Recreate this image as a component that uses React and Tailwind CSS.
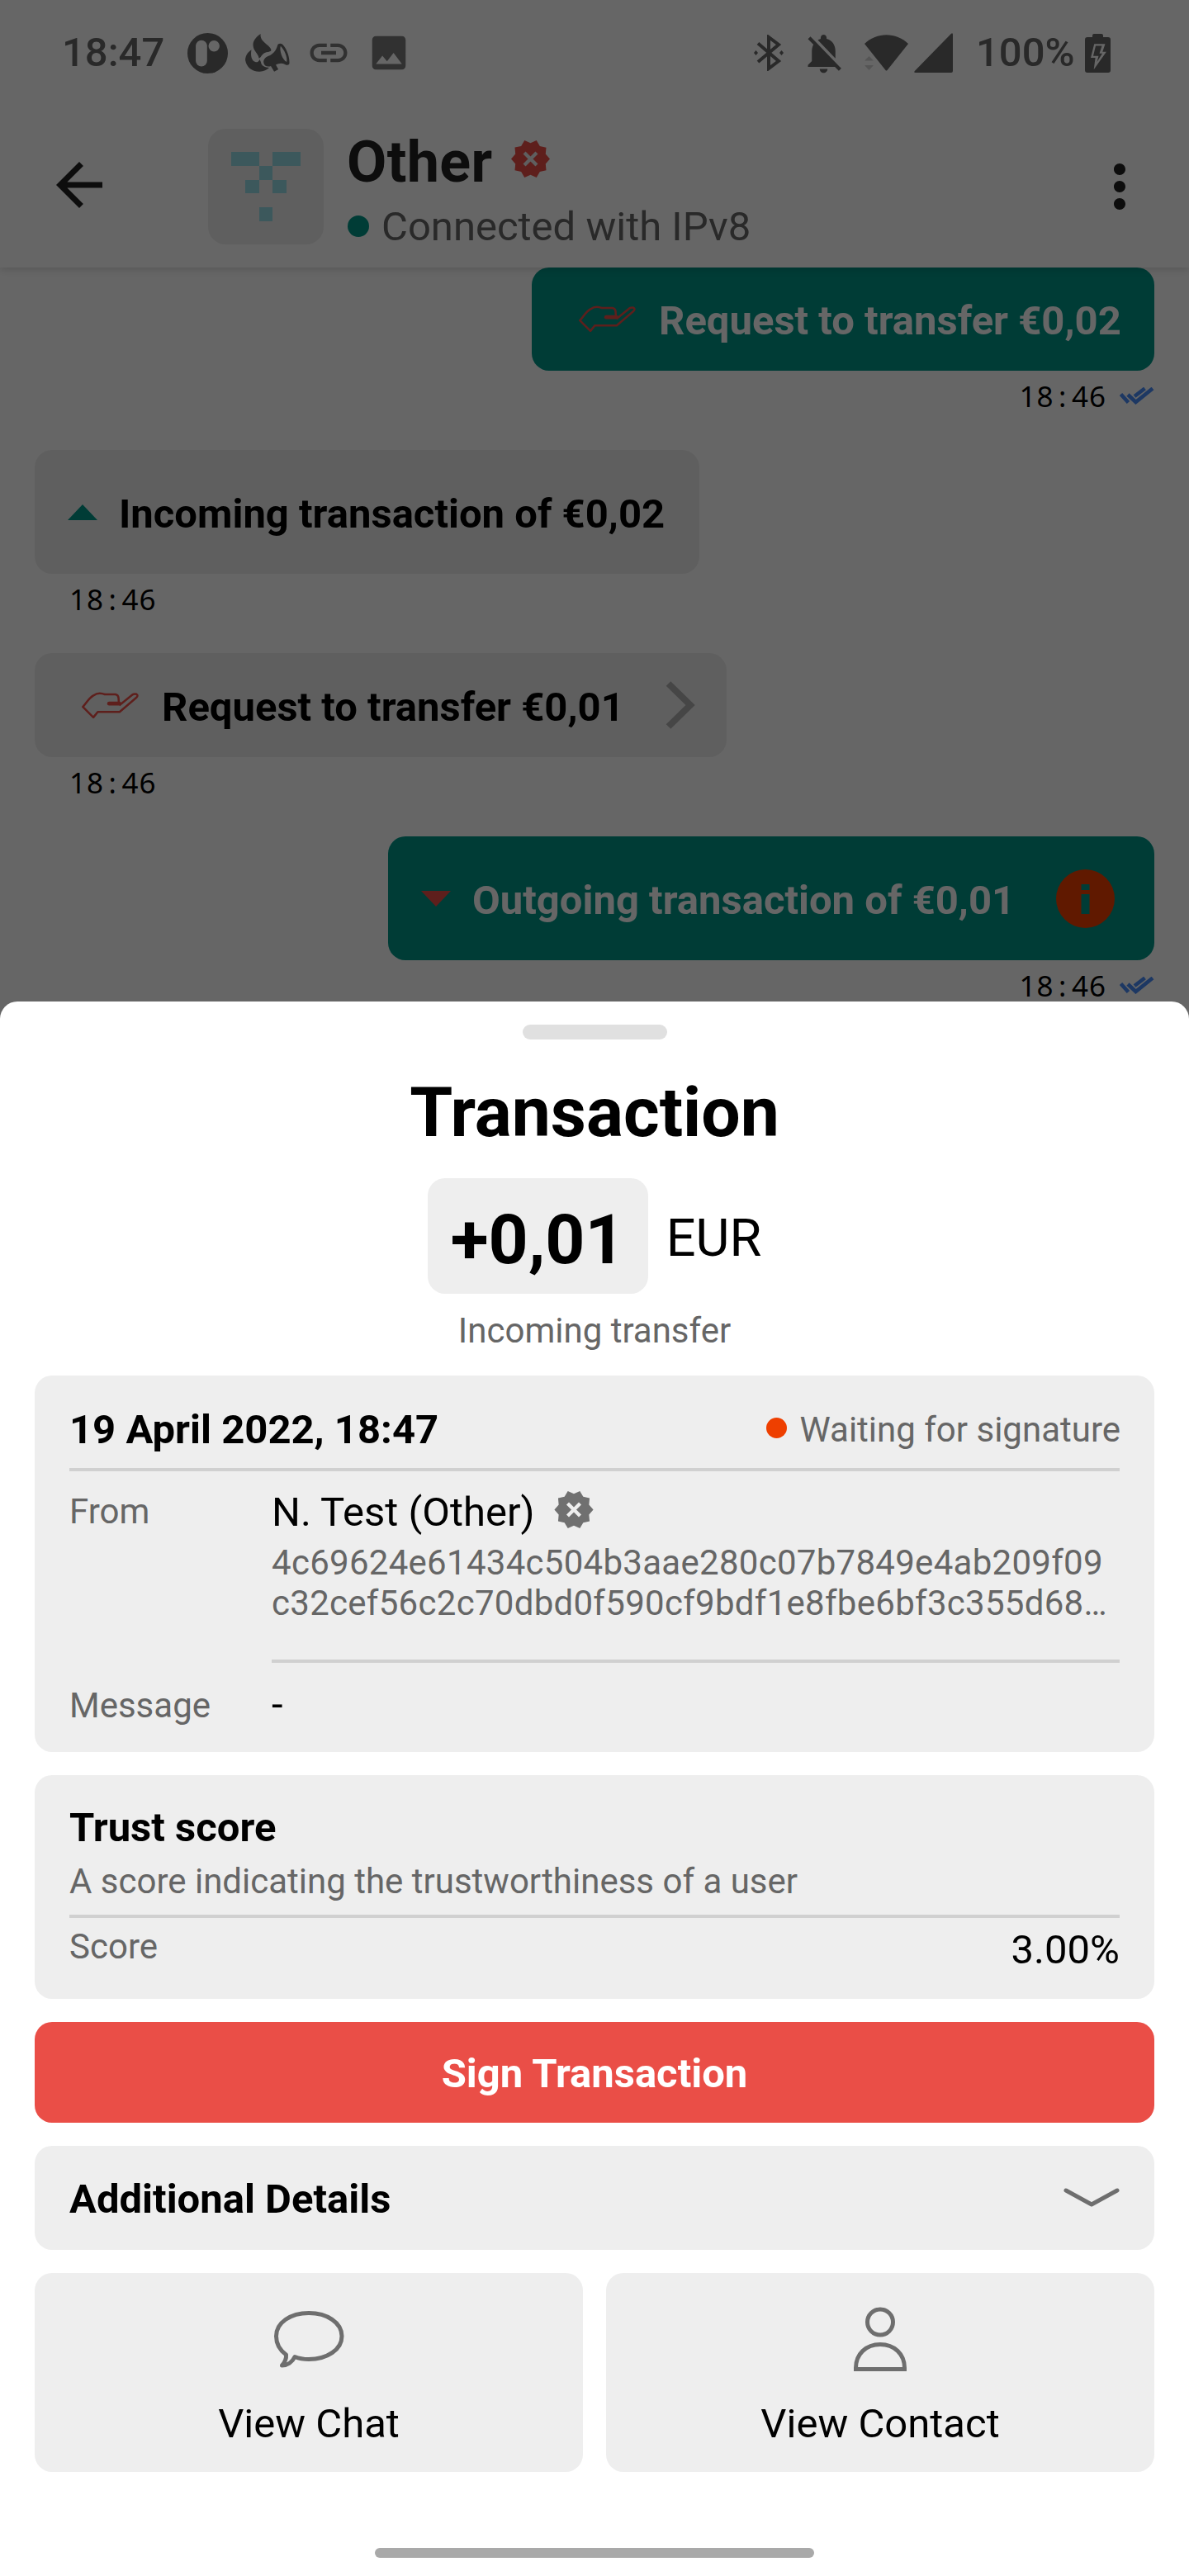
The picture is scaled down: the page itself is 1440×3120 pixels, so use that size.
import React from "react";
import { MdArrowBack, MdImage, MdLink, MdMoreVert, MdNotificationsOff } from "react-icons/md";

function FireHornIcon() {
  return (
    <svg className="w-[54px] h-[46px]" viewBox="0 0 160 137" fill="currentColor">
      <path d="M55 0C38 12 27 25 28 42C29 62 46 70 49 88C54 90 58 74 72 68C84 62 97 66 92 54C82 36 52 28 55 0Z" />
      <path d="M22 57C5 68 0 82 0 95C4 120 25 137 52 136C66 136 78 130 86 122C72 122 58 116 56 102L52 92C48 100 44 103 38 102C22 98 18 78 22 57Z" />
      <path
        fillRule="evenodd"
        d="M66 104C64 90 76 82 88 78C102 72 112 58 116 42C118 33 128 33 134 38C150 54 160 84 159 106C158 114 150 114 143 110C132 104 120 106 110 112L119 128L104 136L92 116C80 120 68 116 66 104ZM127 44C122 62 134 94 149 101C153 84 140 56 127 44Z"
      />
    </svg>
  );
}

function BluetoothIcon() {
  return (
    <svg className="w-[36px] h-[44px]" viewBox="0 0 36 44">
      <path d="M5 10.5L30 32L18 41V3L30 12L5 33" fill="none" stroke="currentColor" strokeWidth="4" />
      <path d="M0 22l2.5-3l2.5 3l-2.5 3zM31 22l2.5-3l2.5 3l-2.5 3z" fill="currentColor" />
    </svg>
  );
}

function WifiIcon() {
  return (
    <svg className="w-[53px] h-[44px]" viewBox="0 0 53 44">
      <path d="M0 11C15-3.4 38-3.4 53 11L27.5 43Q26.5 44 25.5 43Z" fill="currentColor" />
      <path d="M0 31.5L5.5 26L11 31.5ZM0 37L5.5 43L11 37Z" fill="#d4d4d4" />
    </svg>
  );
}

function SignalIcon() {
  return (
    <svg className="w-[47px] h-[48px]" viewBox="0 0 47 48">
      <path d="M45 .8Q47-.6 47 2V46Q47 48 45 48H2Q-.8 48 .8 46Z" fill="currentColor" />
    </svg>
  );
}

function BatteryIcon() {
  return (
    <svg className="w-[31px] h-[47px]" viewBox="0 0 31 47">
      <path d="M9 4V2Q9 0 11 0H20Q22 0 22 2V4H28Q31 4 31 7V44Q31 47 28 47H3Q0 47 0 44V7Q0 4 3 4Z" fill="currentColor" />
      <path d="M11.2 12.3H24.5L21.3 21.7H25.9L10.7 43.3L12.6 29H7Z" fill="#fff" />
      <path d="M13 14.5H20.5L17.5 23.8H21L14.5 34L16.5 26.8H10Z" fill="currentColor" />
    </svg>
  );
}

function BadgeX({ className }) {
  return (
    <svg className={className} viewBox="1 1.5 22 21">
      <path
        fill="currentColor"
        d="M23 12l-2.44-2.79.34-3.69-3.61-.82L15.4 1.5 12 2.96 8.6 1.5 6.71 4.69 3.1 5.5 3.44 9.2 1 12l2.44 2.79-.34 3.7 3.61.82L8.6 22.5l3.4-1.47 3.4 1.46 1.89-3.19 3.61-.82-.34-3.69L23 12z"
      />
      <path d="M8.5 8.5L15.5 15.5M15.5 8.5L8.5 15.5" stroke="#eee" strokeWidth="2" />
    </svg>
  );
}

function HandIcon() {
  return (
    <svg className="w-[69px] h-[33px] shrink-0" viewBox="26 38 206 98" fill="none" stroke="#ea4e47" strokeWidth="7.5" strokeLinejoin="round">
      <path d="M110 47C94 40 80 42 68 51C50 62 43 78 30 92L68 130L84 110H163L224 58Q231 50 224 46Q217 43 209 48L162 86" />
      <path d="M108 47H148Q158 49 159 60L160 76" />
      <path d="M162 80H125" strokeWidth="14" strokeLinecap="round" />
    </svg>
  );
}

function DoubleCheck() {
  return (
    <svg className="w-[42px] h-[21px]" viewBox="0 0 42 21" fill="none" stroke="#4a8cf8" strokeWidth="4.6">
      <path d="M1.5 8.5L10.5 18.5M10 9L19.5 18L40 1.5M18 11L30.5 1.5" />
    </svg>
  );
}

function Time({ own }) {
  return (
    <div className={own ? "flex h-[60px] mb-[36px] items-center justify-end gap-[16px] pr-[42px]" : "flex h-[60px] mb-[36px] items-center pl-[84px]"}>
      <span className="pt-[2px] font-['Noto_Sans'] text-[35px] font-normal leading-[58px] tracking-[1px] text-black">
        18<span className="px-[5.5px]">:</span>46
      </span>
      {own && <DoubleCheck />}
    </div>
  );
}

function StatusBar() {
  return (
    <div className="flex h-[128px] items-center pl-[75px] pr-[95px] text-[#666]">
      <span className="w-[152px] text-[49px] font-medium leading-[58px]">18:47</span>
      <svg className="w-[49px] h-[49px]" viewBox="0 0 146 146">
        <circle cx="73" cy="73" r="73" fill="currentColor" />
        <rect x="30" y="26" width="41" height="95" rx="20.5" fill="#fff" />
        <circle cx="96" cy="47" r="20" fill="#fff" />
      </svg>
      <div className="ml-[21px]"><FireHornIcon /></div>
      <MdLink className="ml-[20px] size-[54px] text-[#7a7a7a]" />
      <MdImage className="ml-[19px] size-[54px] text-[#7a7a7a]" />
      <div className="ml-auto flex items-center">
        <BluetoothIcon />
        <MdNotificationsOff className="ml-[20px] size-[57px]" />
        <div className="ml-[21px]"><WifiIcon /></div>
        <div className="ml-[7px]"><SignalIcon /></div>
        <span className="ml-[28px] w-[132px] text-[49px] font-medium leading-[58px]">100%</span>
        <BatteryIcon />
      </div>
    </div>
  );
}

const AVATAR = ["11011", "00100", "01010", "00000", "00100"];

function Header() {
  return (
    <div className="relative z-10 flex h-[196px] items-start bg-white pl-[54px] pr-[42px] pt-[27px] shadow-[0_2px_10px_rgba(0,0,0,0.16)] [clip-path:inset(0_0_-20px_0)]">
      <MdArrowBack className="mt-[27px] size-[84px] text-[#212121]" />
      <div className="ml-[114px] mt-px size-[140px] rounded-[21px] bg-[#eee] p-[28px]">
        <div className="grid size-[84px] grid-cols-5 grid-rows-5">
          {AVATAR.join("").split("").map((c, i) => (
            <div key={i} className={c === "1" ? "bg-[#96dce6]" : ""} />
          ))}
        </div>
      </div>
      <div className="ml-[28px]">
        <div className="flex items-center">
          <h1 className="text-[70px] font-bold leading-[82px] tracking-[0.4px] text-[#212121]">Other</h1>
          <BadgeX className="mb-[7px] ml-[22px] h-[45px] w-[47px] text-[#ea4e47]" />
        </div>
        <div className="mt-[9px] flex items-center">
          <div className="mb-[2px] ml-px size-[26px] rounded-full bg-[#009688]" />
          <span className="ml-[15px] text-[49px] leading-[58px] text-[#666]">Connected with IPv8</span>
        </div>
      </div>
      <MdMoreVert className="ml-auto mt-[29px] size-[84px] text-[#212121]" />
    </div>
  );
}

function Chat() {
  return (
    <div className="text-[49px] font-bold leading-[58px] text-black">
      <div className="ml-auto mr-[42px] flex h-[125px] w-[754px] items-center rounded-[21px] bg-[#009688] pl-[57px] text-white">
        <HandIcon />
        <span className="ml-[28px] whitespace-nowrap pt-[4px]">Request to transfer €0,02</span>
      </div>
      <Time own />
      <div className="ml-[42px] flex h-[150px] w-[805px] items-center rounded-[21px] bg-[#eee] pl-[40px]">
        <svg className="h-[19px] w-[36px]" viewBox="0 0 36 19"><path d="M0 19L18 0L36 19Z" fill="#009688" /></svg>
        <span className="ml-[26px] whitespace-nowrap pt-[5px]">Incoming transaction of €0,02</span>
      </div>
      <Time />
      <div className="ml-[42px] flex h-[126px] w-[838px] items-center rounded-[21px] bg-[#eee] pl-[57px]">
        <HandIcon />
        <span className="ml-[28px] whitespace-nowrap pt-[5px]">Request to transfer €0,01</span>
        <svg className="ml-auto mr-[38px] h-[58px] w-[36px]" viewBox="0 0 36 58">
          <path d="M3.5 3L30 29L3.5 55" fill="none" stroke="#afafaf" strokeWidth="8" />
        </svg>
      </div>
      <Time />
      <div className="ml-auto mr-[42px] flex h-[150px] w-[928px] items-center rounded-[21px] bg-[#009688] pl-[40px] text-white">
        <svg className="h-[19px] w-[36px]" viewBox="0 0 36 19"><path d="M0 0L18 19L36 0Z" fill="#ea4e47" /></svg>
        <span className="ml-[26px] whitespace-nowrap pt-[5px]">Outgoing transaction of €0,01</span>
        <svg className="ml-auto mr-[48px] size-[71px]" viewBox="0 0 71 71">
          <circle cx="35.5" cy="35.5" r="35.5" fill="#f04000" />
          <path d="M30.500 30H40.500V54H30.500ZM30.500 18H40.500V25H30.500Z" fill="#009688" />
        </svg>
      </div>
      <Time own />
    </div>
  );
}

function TransactionCard() {
  return (
    <section className="h-[456px] rounded-[21px] bg-[#eee] px-[42px]">
      <div className="flex h-[116px] items-center border-b-4 border-[#d0d0d0] pt-[19px]">
        <h3 className="text-[49px] font-bold leading-[58px]">19 April 2022, 18:47</h3>
        <div className="mb-[4px] ml-auto size-[25px] rounded-full bg-[#ee3f00]" />
        <span className="-mr-px ml-[15px] text-[42px] leading-[50px] text-[#666]">Waiting for signature</span>
      </div>
      <div className="flex h-[232px] text-[42px] text-[#666]">
        <span className="w-[245px] pt-[24px] leading-[50px]">From</span>
        <div className="flex-1 border-b-4 border-[#d0d0d0] pt-[21px]">
          <div className="flex items-center">
            <span className="text-[49px] leading-[58px] text-black">N. Test (Other)</span>
            <BadgeX className="mb-[7px] ml-[23px] h-[45px] w-[48px] text-[#707070]" />
          </div>
          <div className="mt-[7px] whitespace-nowrap leading-[49px] tracking-[0.28px]">
            4c69624e61434c504b3aae280c07b7849e4ab209f09
            <br />
            c32cef56c2c70dbd0f590cf9bdf1e8fbe6bf3c355d68…
          </div>
        </div>
      </div>
      <div className="flex pt-[22px]">
        <span className="w-[245px] pt-[5px] text-[42px] leading-[50px] text-[#666]">Message</span>
        <span className="text-[49px] leading-[58px]">-</span>
      </div>
    </section>
  );
}

function TrustCard() {
  return (
    <section className="mt-[28px] h-[271px] rounded-[21px] bg-[#eee] px-[42px] pt-[35px]">
      <h3 className="text-[49px] font-bold leading-[58px]">Trust score</h3>
      <p className="mt-[11px] text-[42px] leading-[50px] text-[#666]">A score indicating the trustworthiness of a user</p>
      <div className="mt-[15px] flex justify-between border-t-4 border-[#d0d0d0] pt-[10px]">
        <span className="text-[42px] leading-[50px] text-[#666]">Score</span>
        <span className="text-[49px] leading-[58px]">3.00%</span>
      </div>
    </section>
  );
}

function ActionCard({ label, children }) {
  return (
    <button className="flex h-[241px] w-[664px] flex-col items-center rounded-[21px] bg-[#eee] pt-[38px]">
      <svg className="h-[84px] w-[88px]" viewBox="0 0 88 84" fill="none" stroke="#6e6e6e" strokeWidth="5">
        {children}
      </svg>
      <span className="mt-[32px] text-[49px] leading-[58px]">{label}</span>
    </button>
  );
}

function Sheet() {
  return (
    <div className="absolute inset-x-0 bottom-0 z-30 h-[1907px] rounded-t-[21px] bg-white px-[42px] pt-[28px] text-black">
      <div className="mx-auto h-[18px] w-[175px] rounded-[9px] bg-[#e0e0e0]" />
      <h2 className="mt-[40px] text-center text-[84px] font-bold leading-[98px]">Transaction</h2>
      <div className="mt-[30px] flex items-center justify-center">
        <div className="h-[140px] w-[267px] rounded-[21px] bg-[#eee] pt-[26px] text-center text-[84px] font-bold leading-[98px]">+0,01</div>
        <span className="ml-[22px] pt-[6px] text-[63px] leading-[74px]">EUR</span>
      </div>
      <p className="mb-[29px] mt-[20px] text-center text-[42px] leading-[50px] text-[#666]">Incoming transfer</p>
      <TransactionCard />
      <TrustCard />
      <button className="mt-[28px] block h-[122px] w-full rounded-[21px] bg-[#ea4e47] pt-[4px] text-center text-[49px] font-bold leading-[58px] text-white">
        Sign Transaction
      </button>
      <div className="mt-[28px] flex h-[126px] items-center justify-between rounded-[21px] bg-[#eee] px-[42px]">
        <span className="pt-[4px] text-[49px] font-bold leading-[58px]">Additional Details</span>
        <svg className="h-[25px] w-[68px]" viewBox="0 0 68 25">
          <path d="M3 3L34 20L65 3" fill="none" stroke="#6e6e6e" strokeWidth="5" strokeLinecap="round" strokeLinejoin="round" />
        </svg>
      </div>
      <div className="mt-[28px] flex justify-between">
        <ActionCard label="View Chat">
          <path d="M16.500 61C7 54 4.500 46 4.500 38.500C4.500 22 22 10.500 44 10.500C66 10.500 84 22 84 38.500C84 55 66 66.500 44 66.500C37 66.500 32 65.500 27 63.500C24 70 18 74 11.500 74C15 70 17 66 16.500 61Z" strokeLinejoin="round" />
        </ActionCard>
        <ActionCard label="View Contact">
          <circle cx="44" cy="21.500" r="15.500" />
          <path d="M14.500 78.500V77C14.500 60 27 48.500 44 48.500C61 48.500 73.500 60 73.500 77V78.500Z" />
        </ActionCard>
      </div>
      <div className="mx-auto mt-[92px] h-[12px] w-[532px] rounded-[6px] bg-[#a9a9a9]" />
    </div>
  );
}

export default function App() {
  return (
    <main className="relative h-[3120px] w-[1440px] overflow-hidden bg-white font-['Roboto',sans-serif]">
      <StatusBar />
      <Header />
      <Chat />
      <div className="absolute inset-0 z-20 bg-black/60" />
      <Sheet />
    </main>
  );
}
